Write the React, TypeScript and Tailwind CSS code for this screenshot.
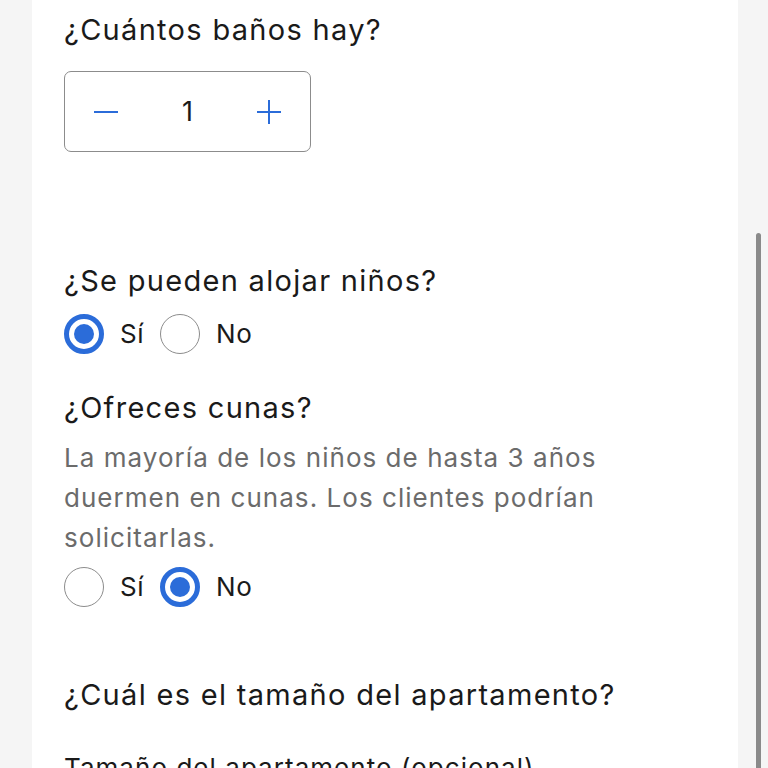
import { useState } from "react";

function Radio({ checked, label, onClick }: { checked: boolean; label: string; onClick: () => void }) {
  return (
    <button type="button" onClick={onClick} className="flex items-center gap-4">
      {checked ? (
        <span className="flex h-10 w-10 items-center justify-center rounded-full border-[5px] border-[#2b6cd9] bg-white">
          <span className="h-5 w-5 rounded-full bg-[#2b6cd9]" />
        </span>
      ) : (
        <span className="h-10 w-10 rounded-full border-[1.5px] border-[#8c8c8c] bg-white" />
      )}
      <span className="text-[26px] leading-10 tracking-[0.02em] text-[#1a1a1a]">{label}</span>
    </button>
  );
}

export default function App() {
  const [baths, setBaths] = useState(1);
  const [kids, setKids] = useState(true);
  const [cribs, setCribs] = useState(false);

  return (
    <div
      className="relative h-[768px] w-[768px] overflow-hidden bg-[#f5f5f5]"
      style={{ fontFamily: '"Inter", "Noto Sans", sans-serif' }}
    >
      <div className="ml-8 h-full w-[706px] bg-white px-8 pt-[10px]">
        <h2 className="text-[29px] leading-10 tracking-[0.045em] text-[#1a1a1a]">¿Cuántos baños hay?</h2>

        <div className="mt-[21px] flex h-[81px] w-[247px] items-center justify-between rounded-[7px] border-[1.5px] border-[#8c8c8c] px-7">
          <button type="button" onClick={() => setBaths(Math.max(0, baths - 1))} className="text-[#2b6cd9]">
            <svg width="26" height="26" viewBox="0 0 26 26" fill="none" stroke="currentColor" strokeWidth="2">
              <path d="M1 13h24" />
            </svg>
          </button>
          <span className="text-[27px] leading-none text-[#1a1a1a]">{baths}</span>
          <button type="button" onClick={() => setBaths(baths + 1)} className="text-[#2b6cd9]">
            <svg width="26" height="26" viewBox="0 0 26 26" fill="none" stroke="currentColor" strokeWidth="2">
              <path d="M1 13h24M13 1v24" />
            </svg>
          </button>
        </div>

        <h2 className="mt-[109px] text-[29px] leading-10 tracking-[0.045em] text-[#1a1a1a]">¿Se pueden alojar niños?</h2>
        <div className="mt-[13px] flex items-center gap-4">
          <Radio checked={kids} label="Sí" onClick={() => setKids(true)} />
          <Radio checked={!kids} label="No" onClick={() => setKids(false)} />
        </div>

        <h2 className="mt-[34px] text-[29px] leading-10 tracking-[0.045em] text-[#1a1a1a]">¿Ofreces cunas?</h2>
        <p className="mt-[10px] w-[615px] text-[26px] leading-10 tracking-[0.04em] text-[#6b6b6b]">
          La mayoría de los niños de hasta 3 años duermen en cunas. Los clientes podrían solicitarlas.
        </p>
        <div className="mt-[9px] flex items-center gap-4">
          <Radio checked={cribs} label="Sí" onClick={() => setCribs(true)} />
          <Radio checked={!cribs} label="No" onClick={() => setCribs(false)} />
        </div>

        <h2 className="mt-[68px] text-[29px] leading-10 tracking-[0.045em] text-[#1a1a1a]">
          ¿Cuál es el tamaño del apartamento?
        </h2>
        <label className="mt-[33px] block text-[26px] leading-10 tracking-[0.04em] text-[#1a1a1a]">
          Tamaño del apartamento (opcional)
        </label>
      </div>

      <div className="absolute right-[7px] top-[233px] h-[560px] w-[5px] rounded-full bg-[#8a8a8a]" />
    </div>
  );
}
